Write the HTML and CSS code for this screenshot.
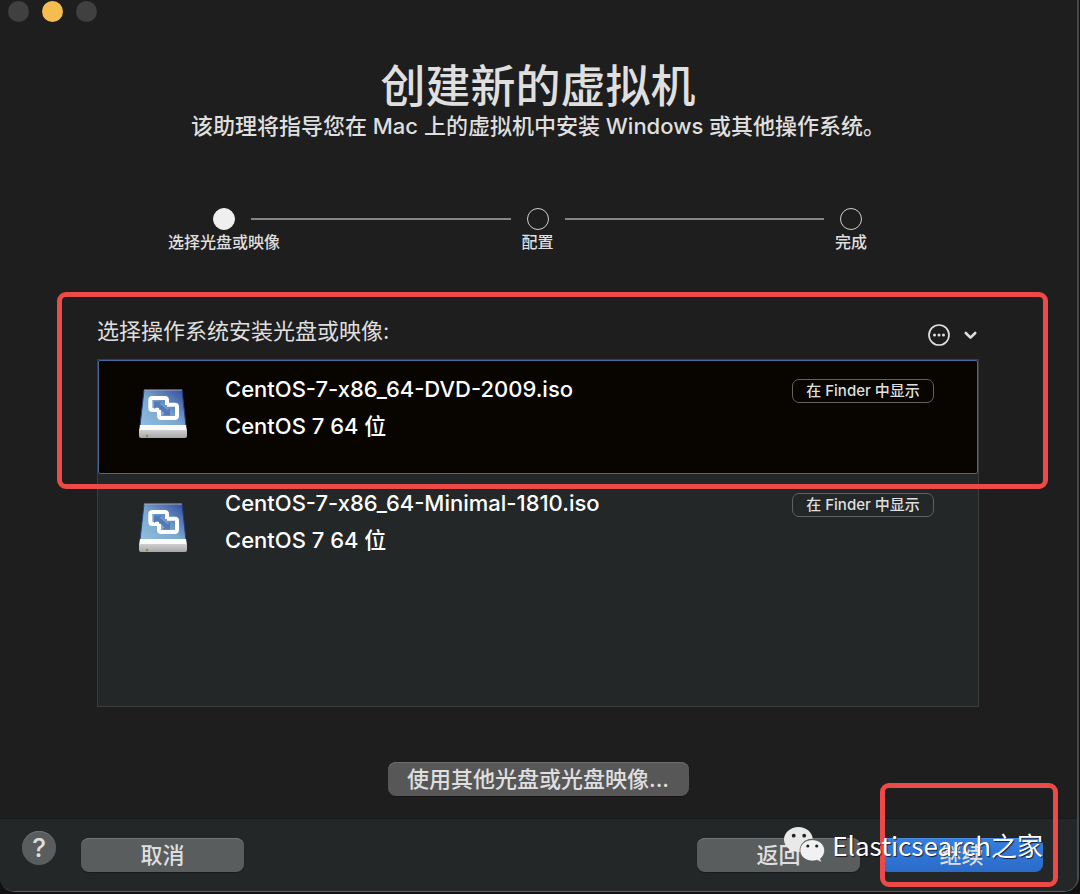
FILE: index.html
```html
<!DOCTYPE html>
<html lang="zh-CN">

<head>
    <meta charset="UTF-8">
    <meta name="viewport" content="width=device-width, initial-scale=1.0">
    <title>创建新的虚拟机</title>
    <link rel="stylesheet" href="styles.css">
</head>

<body>
    <!-- shared drawing of the disk image icon -->
    <svg class="defs" width="0" height="0" aria-hidden="true">
        <defs>
            <linearGradient id="disk-top" x1="0" y1="1" x2="1" y2="0">
                <stop offset="0" stop-color="#8fbfdc" />
                <stop offset="0.45" stop-color="#7ba8d0" />
                <stop offset="1" stop-color="#30489a" />
            </linearGradient>
            <linearGradient id="disk-front" x1="0" y1="0" x2="0" y2="1">
                <stop offset="0" stop-color="#d0d0d0" />
                <stop offset="1" stop-color="#a6a6a6" />
            </linearGradient>
            <symbol id="disk" viewBox="0 0 48 50">
                <path d="M5 1H43L47 37H1Z" fill="url(#disk-top)" />
                <path d="M5 1L1 37M43 1L47 37" stroke="#263a86" stroke-width="1" />
                <path d="M5 1H43" stroke="#a9acb8" stroke-width="1" />
                <path d="M1 36H47L48 42H0Z" fill="#fafafa" />
                <path d="M0 41H48V47Q48 49 46 49H2Q0 49 0 47Z" fill="url(#disk-front)" />
                <circle cx="8" cy="47" r="1.3" fill="#93913c" />
                <g fill="none" stroke="#fff" stroke-width="4" stroke-linejoin="round">
                    <path d="M20 21H13.500Q11.300 21 11.300 18.800V11.200Q11.300 9 13.500 9H25.800Q28 9 28 11.200V16" />
                    <path d="M28 15.800H35.800Q38 15.800 38 18V26.800Q38 29 35.800 29H22.200Q20 29 20 26.800V21" />
                </g>
                <path d="M15 12.500H23L20.800 14.700L28.500 21.200L31 19V26.500H23.200L25.600 24.200L18 17.500L15 20Z" fill="#5479b5" />
            </symbol>
        </defs>
    </svg>

    <div class="window">
        <div class="titlebar">
            <button type="button" class="light" aria-label="关闭"></button>
            <button type="button" class="light minimize" aria-label="最小化"></button>
            <button type="button" class="light" aria-label="缩放"></button>
        </div>

        <main>
            <header>
                <h1>创建新的虚拟机</h1>
                <p>该助理将指导您在 Mac 上的虚拟机中安装 Windows 或其他操作系统。</p>
            </header>

            <ol class="steps">
                <li class="step current"><span class="dot"></span><span class="step-name">选择光盘或映像</span></li>
                <li class="line"></li>
                <li class="step"><span class="dot"></span><span class="step-name">配置</span></li>
                <li class="line"></li>
                <li class="step"><span class="dot"></span><span class="step-name">完成</span></li>
            </ol>

            <section class="picker">
                <div class="picker-head">
                    <h2>选择操作系统安装光盘或映像:</h2>
                    <button type="button" class="more" aria-label="更多选项">
                        <svg width="52" height="24" viewBox="0 0 52 24" fill="none">
                            <circle cx="12" cy="12" r="10" stroke="#dfdfdf" stroke-width="1.7" />
                            <g fill="#dfdfdf">
                                <circle cx="7.500" cy="12" r="1.500" />
                                <circle cx="12" cy="12" r="1.500" />
                                <circle cx="16.500" cy="12" r="1.500" />
                            </g>
                            <path d="M38.800 10L43.500 14.700L48.200 10" stroke="#dfdfdf" stroke-width="2.600" stroke-linecap="round" stroke-linejoin="round" />
                        </svg>
                    </button>
                </div>

                <ul class="images">
                    <li class="image selected">
                        <svg class="disk" width="48" height="50"><use href="#disk" /></svg>
                        <div class="info">
                            <div>CentOS-7-x86_64-DVD-2009.iso</div>
                            <div>CentOS 7 64 位</div>
                        </div>
                        <button type="button" class="reveal">在 Finder 中显示</button>
                    </li>
                    <li class="image">
                        <svg class="disk" width="48" height="50"><use href="#disk" /></svg>
                        <div class="info">
                            <div>CentOS-7-x86_64-Minimal-1810.iso</div>
                            <div>CentOS 7 64 位</div>
                        </div>
                        <button type="button" class="reveal">在 Finder 中显示</button>
                    </li>
                </ul>
                <div class="mark mark-picker"></div>
            </section>

            <button type="button" class="btn other">使用其他光盘或光盘映像...</button>
        </main>

        <footer>
            <button type="button" class="help" aria-label="帮助">?</button>
            <button type="button" class="btn cancel">取消</button>
            <button type="button" class="btn back">返回</button>
            <div class="next-wrap">
                <button type="button" class="btn next">继续</button>
                <div class="mark mark-next"></div>
            </div>
            <div class="watermark">
                <svg width="42" height="36" viewBox="0 0 42 36">
                    <path d="M14.500 0C6.500 0 0 5.600 0 12.600C0 16.600 2.100 20 5.400 22.300L4 26.600L9.200 24Q14 25.600 18 24.700C14 17 22 11.500 28.800 11.800C28 5 22 0 14.500 0Z" fill="#e9e9e9" />
                    <path d="M28.200 12.700C21.400 12.700 16 17.400 16 23.300S21.400 34 28.200 34Q31 34 33.300 33.200L37.700 35.500L36.500 31.700C39.200 29.700 40.600 26.700 40.600 23.300C40.600 17.400 35 12.700 28.200 12.700Z" fill="#f1f1f1" stroke="#53575a" stroke-width="0.700" />
                    <g fill="#202325">
                        <circle cx="9.700" cy="8.700" r="1.900" />
                        <circle cx="20.200" cy="8.700" r="1.900" />
                        <circle cx="23.800" cy="19" r="1.600" />
                        <circle cx="32.700" cy="19" r="1.600" />
                    </g>
                </svg>
                <span>Elasticsearch之家</span>
            </div>
        </footer>
    </div>
</body>

</html>
```

FILE: styles.css
```css
* {
    box-sizing: border-box;
}

body {
    margin: 0;
    background-color: #111;
    color: #dfdfdf;
    font-family: Inter, "Noto Sans CJK SC", sans-serif;
    font-size: 22px;
}

h1,
h2,
p,
ol,
ul {
    margin: 0;
    padding: 0;
    font-weight: 400;
    list-style: none;
}

button {
    padding: 0;
    border: none;
    background: none;
    color: inherit;
    font: inherit;
    white-space: nowrap;
}

.defs {
    position: absolute;
}

.window {
    display: flex;
    flex-direction: column;
    min-height: calc(100vh - 2px);
    margin-right: 1px;
    border-right: 2px solid #48494a;
    border-bottom: 1px solid #5a5d5e;
    border-radius: 0 0 15px 15px;
    background-color: #1e1e1e;
    overflow: hidden;
}

.titlebar {
    display: flex;
    gap: 13px;
    padding: 1px 8px;
}

.light {
    width: 21px;
    height: 21px;
    border-radius: 50%;
    background-color: #404040;
}

.minimize {
    background-color: #f5bd4f;
}

main {
    display: flex;
    flex-direction: column;
    flex: 1;
    padding: 37px 98px 22px 97px;
}

header {
    text-align: center;
}

h1 {
    font-size: 45px;
    font-weight: 500;
    line-height: 54px;
}

p {
    font-weight: 500;
    line-height: 24px;
}

/* progress of the assistant */
.steps {
    display: flex;
    margin: 70px 101px 0 100px;
}

.step {
    display: flex;
    flex-direction: column;
    align-items: center;
    width: 54px;
}

.dot {
    width: 22px;
    height: 22px;
    border: 1px solid #cfcfcf;
    border-radius: 50%;
}

.current .dot {
    border-color: #efefef;
    background-color: #efefef;
}

.step-name {
    font-size: 16px;
    font-weight: 500;
    line-height: 24px;
    white-space: nowrap;
}

.line {
    flex: 1;
    height: 2px;
    margin-top: 10px;
    background-color: #858585;
}

/* list of disk images */
.picker {
    position: relative;
    margin-top: 62px;
}

.picker-head {
    display: flex;
    align-items: center;
    justify-content: space-between;
    height: 43px;
}

.picker-head h2 {
    padding-bottom: 14px;
    font-size: 22px;
    line-height: 32px;
}

.more {
    height: 24px;
    margin-top: -6px;
}

.more svg {
    display: block;
}

.images {
    height: 348px;
    border: 1px solid #3b3c3d;
    background-color: #232728;
}

.image {
    display: flex;
    align-items: flex-start;
    height: 114px;
    padding: 10px 43px 0 40px;
    border: 1px solid transparent;
    color: #fff;
}

.selected {
    border-color: #47689f;
    border-radius: 2px;
    background-color: #080500;
}

.disk {
    margin-top: 18px;
}

.info {
    flex: 1;
    margin-left: 38px;
    font-weight: 500;
    line-height: 37px;
}

.reveal {
    width: 142px;
    height: 24px;
    margin-top: 8px;
    border: 1px solid #63615f;
    border-radius: 7px;
    color: #dfdfdf;
    font-size: 15px;
    font-weight: 500;
    line-height: 22px;
}

.btn {
    width: 163px;
    height: 34px;
    border-radius: 8px;
    background-color: #5a5d5e;
    box-shadow: inset 0 1px #717475, 0 1px 1px rgba(0, 0, 0, .3);
    font-weight: 500;
    line-height: 30px;
}

.other {
    align-self: center;
    width: 301px;
    margin-top: 55px;
    background-color: #575757;
    box-shadow: inset 0 1px #6d6d6d, 0 1px 1px rgba(0, 0, 0, .3);
}

footer {
    position: relative;
    display: flex;
    align-items: flex-start;
    height: 73px;
    padding: 19px 34px 0 22px;
    border-top: 1px solid #171a1b;
    background-color: #232728;
}

.help {
    width: 34px;
    height: 34px;
    margin-top: -7px;
    border-radius: 50%;
    background-color: #5a5d5e;
    box-shadow: inset 0 1px #6d7071;
    font-size: 26px;
    font-weight: 500;
    line-height: 34px;
}

.cancel {
    margin-left: 25px;
}

.back {
    margin-left: auto;
}

.next-wrap {
    position: relative;
    margin-left: 20px;
}

.next {
    background: linear-gradient(#367fe2, #2b6bc8);
    box-shadow: inset 0 1px #4b8de5;
}

/* red annotation frames */
.mark {
    position: absolute;
    border: 5px solid #ec4a48;
    border-radius: 9px;
    pointer-events: none;
}

.mark-picker {
    top: -24px;
    right: -69px;
    left: -40px;
    height: 197px;
}

.mark-next {
    top: -55px;
    right: -15px;
    bottom: -15px;
    left: 0;
}

.watermark {
    position: absolute;
    top: 8px;
    right: 34px;
    display: flex;
    gap: 6px;
    color: #fff;
    font-family: "Noto Sans CJK SC", sans-serif;
    font-size: 26px;
    line-height: 36px;
    text-shadow: 1px 1px 1px rgba(0, 0, 0, .7);
    pointer-events: none;
}
```
